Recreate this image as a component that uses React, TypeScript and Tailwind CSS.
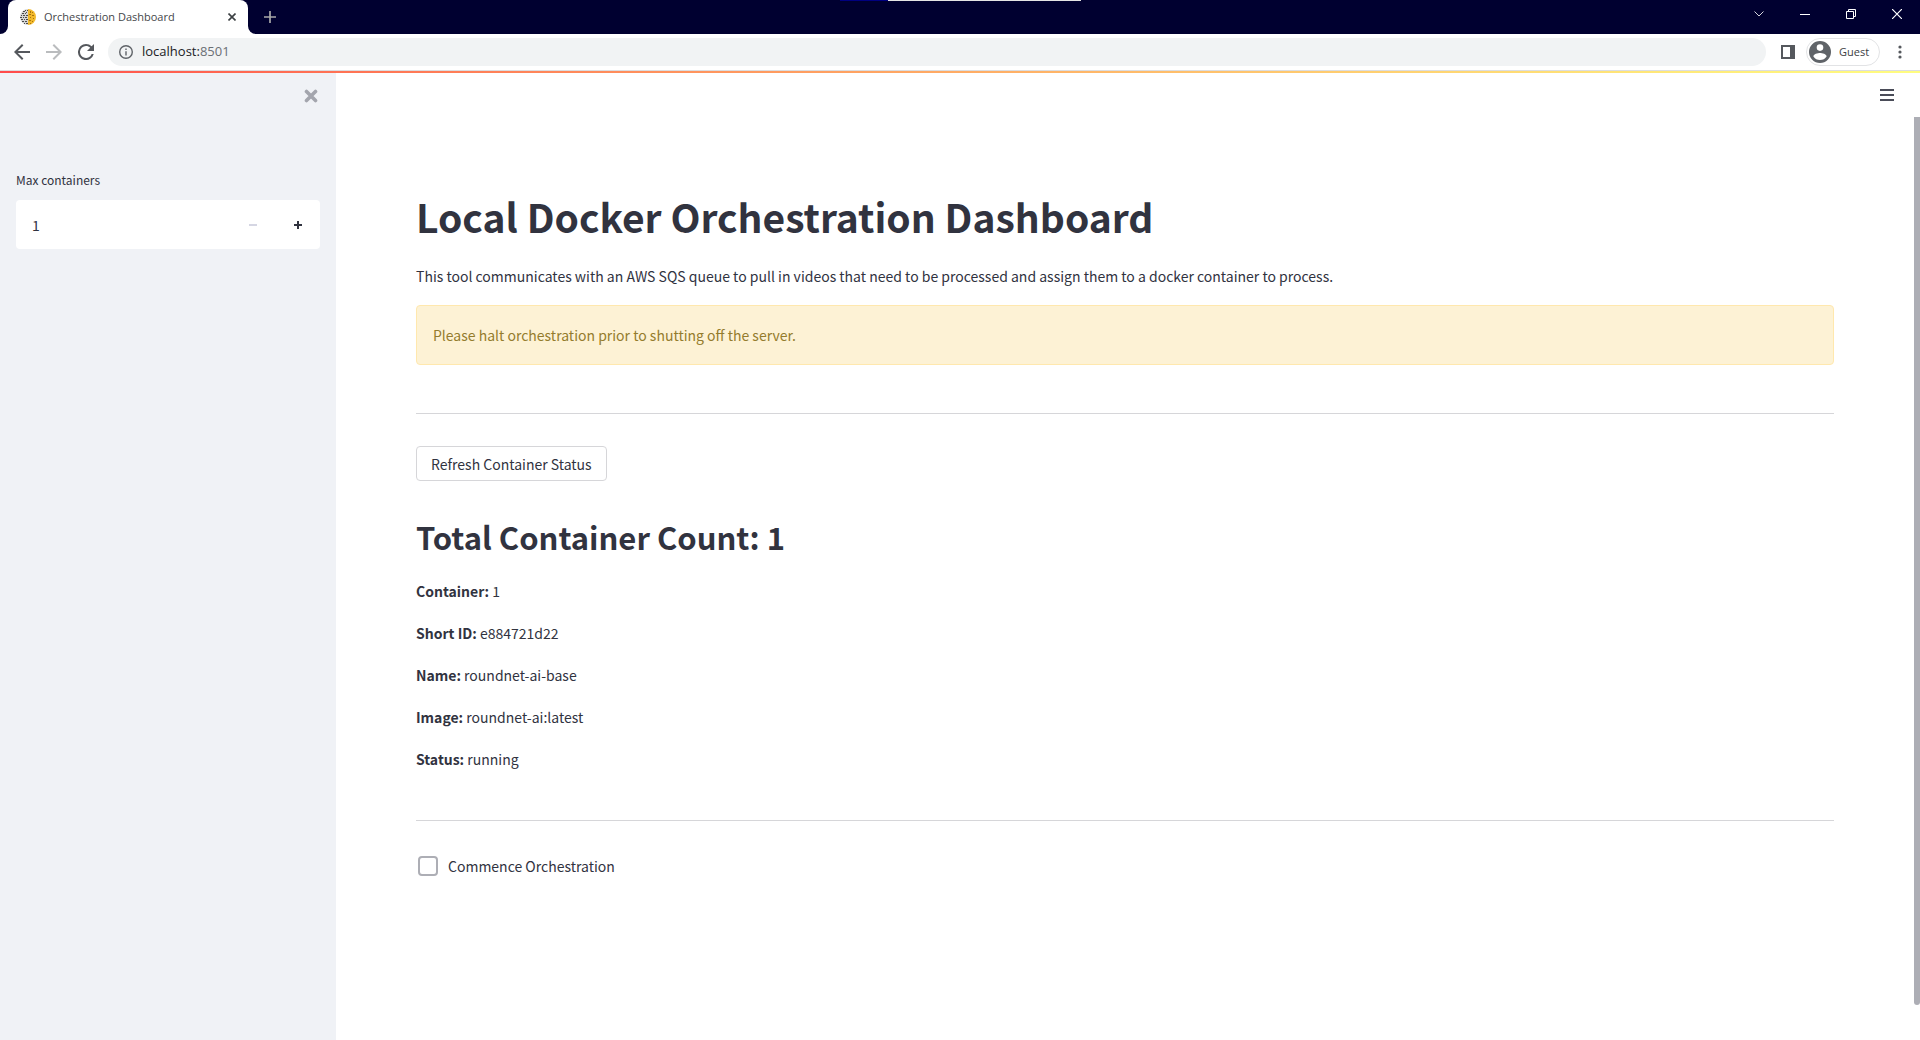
import React from "react";

const details = [
  { label: "Container:", value: "1" },
  { label: "Short ID:", value: "e884721d22" },
  { label: "Name:", value: "roundnet-ai-base" },
  { label: "Image:", value: "roundnet-ai:latest" },
  { label: "Status:", value: "running" },
];

function Favicon() {
  return (
    <svg viewBox="0 0 16 16" className="size-4 shrink-0" aria-hidden="true">
      <path d="M8 0a8 8 0 0 0 0 16z" fill="#d6d6d6" />
      <path
        d="M5 1h1v1H5zM7 1h1v1H7zM3 2h2v1H3zM6 3h1v1H6zM2 4h2v1H2zM5 4h1v1H5zM1 6h1v1H1zM3 6h2v1H3zM6 6h2v1H6zM0 8h2v1H0zM3 8h1v1H3zM5 8h2v1H5zM1 10h2v1H1zM4 10h1v1H4zM6 10h2v1H6zM2 12h2v1H2zM5 12h2v1H5zM4 14h1v1H4zM6 14h2v1H6z"
        fill="#4b4b4b"
      />
      <path d="M8 0a8 8 0 0 1 0 16z" fill="#f2b92b" />
      <path
        d="M10 2h1v2h-1zM12 3h1v1h-1zM9 5h2v1H9zM12 6h2v1h-2zM10 8h1v1h-1zM13 9h1v1h-1zM9 11h2v1H9zM12 12h1v1h-1zM10 14h1v1h-1z"
        fill="#a8730f"
      />
    </svg>
  );
}

function TabStrip() {
  return (
    <header className="relative flex h-[34px] items-stretch justify-between bg-[#000030]">
      <div className="absolute left-[43.75%] top-0 flex h-px w-[241px]" aria-hidden="true">
        <span className="w-12 bg-[#000080]" />
        <span className="flex-1 bg-[#e5e5e5]" />
      </div>
      <div className="flex">
        <div className="w-2 bg-white">
          <div className="h-full rounded-br-lg bg-[#000030]" />
        </div>
        <div className="bg-[#000030]">
          <div className="flex h-full w-60 items-center rounded-t-lg bg-white pl-3 pr-2">
            <Favicon />
            <span className="ml-2 flex-1 text-[11px] text-[#45474a]">Orchestration Dashboard</span>
            <button aria-label="Close tab" className="flex size-4 items-center justify-center">
              <svg viewBox="0 0 8 8" className="size-2" aria-hidden="true">
                <path d="M0.5 0.5l7 7M7.5 0.5l-7 7" stroke="#3c4043" strokeWidth="1.6" />
              </svg>
            </button>
          </div>
        </div>
        <div className="w-2 bg-white">
          <div className="h-full rounded-bl-lg bg-[#000030]" />
        </div>
        <button aria-label="New tab" className="flex w-7 items-center justify-center">
          <svg viewBox="0 0 12 12" className="size-3" aria-hidden="true">
            <path d="M6 0v12M0 6h12" stroke="#a8a8a8" strokeWidth="1.7" />
          </svg>
        </button>
      </div>
      <div className="flex pb-1.5">
        <button aria-label="Search tabs" className="flex w-[46px] items-center justify-center">
          <svg viewBox="0 0 10 6" className="h-1.5 w-2.5" aria-hidden="true">
            <path d="M0.5 0.5L5 5l4.500-4.500" fill="none" stroke="#d4d4dc" />
          </svg>
        </button>
        <button aria-label="Minimize" className="flex w-[46px] items-center justify-center">
          <span className="h-px w-2.5 bg-white" />
        </button>
        <button aria-label="Restore" className="flex w-[46px] items-center justify-center">
          <svg viewBox="0 0 10 10" className="size-2.5" fill="none" stroke="#fff" aria-hidden="true">
            <path d="M0.5 2.500h7v7h-7zM2.500 2.500v-2h7v7h-2" />
          </svg>
        </button>
        <button aria-label="Close" className="flex w-[46px] items-center justify-center">
          <svg viewBox="0 0 10 10" className="size-2.5" stroke="#fff" strokeWidth="1.2" aria-hidden="true">
            <path d="M0 0l10 10M10 0L0 10" />
          </svg>
        </button>
      </div>
    </header>
  );
}

function Toolbar() {
  return (
    <div className="flex h-[37px] items-center border-b border-[#dcdde0] bg-white pl-3.5 pr-3">
      <button aria-label="Back" className="mr-4">
        <svg viewBox="4 4 16 16" className="size-4" fill="#55585d" aria-hidden="true">
          <path d="M20 11H7.830l5.590-5.590L12 4l-8 8 8 8 1.410-1.410L7.830 13H20z" />
        </svg>
      </button>
      <button aria-label="Forward" className="mr-4">
        <svg viewBox="4 4 16 16" className="size-4" fill="#babcbe" aria-hidden="true">
          <path d="M12 4l-1.410 1.410L16.170 11H4v2h12.170l-5.580 5.590L12 20l8-8z" />
        </svg>
      </button>
      <button aria-label="Reload" className="mr-3.5">
        <svg viewBox="4 4 16 16" className="size-4" fill="#55585d" aria-hidden="true">
          <path d="M17.650 6.350A7.960 7.960 0 0 0 12 4a8 8 0 1 0 7.730 10h-2.080A6 6 0 1 1 12 6c1.660 0 3.140.69 4.220 1.780L13 11h7V4z" />
        </svg>
      </button>
      <div className="flex h-7 flex-1 items-center gap-[9px] rounded-full bg-[#f1f3f4] pl-[11px]">
        <svg viewBox="2 2 20 20" className="size-3.5" fill="#5f6368" aria-hidden="true">
          <path d="M11 17h2v-6h-2zm1-15a10 10 0 1 0 0 20 10 10 0 0 0 0-20zm0 18a8 8 0 1 1 0-16 8 8 0 0 1 0 16zM11 9h2V7h-2z" />
        </svg>
        <span className="text-[13px] text-[#202124]">
          localhost:<span className="text-[#6b6f74]">8501</span>
        </span>
      </div>
      <button aria-label="Side panel" className="ml-[15px] mr-[11px]">
        <svg viewBox="0 0 14 14" className="size-3.5" aria-hidden="true">
          <path d="M0 0h14v14H0zM2 2v10h7V2z" fill="#55585d" fillRule="evenodd" />
        </svg>
      </button>
      <button className="mr-3 flex h-7 w-[74px] items-center gap-2 rounded-full border border-[#e2e3e5] pl-0.5">
        <svg viewBox="2 2 20 20" className="size-[22px]" fill="#5f6368" aria-hidden="true">
          <path d="M12 2a10 10 0 1 0 0 20 10 10 0 0 0 0-20zm0 3a3 3 0 1 1 0 6 3 3 0 0 1 0-6zm0 14.200a7.200 7.200 0 0 1-6-3.220c.03-1.990 4-3.080 6-3.080s5.970 1.090 6 3.080a7.200 7.200 0 0 1-6 3.220z" />
        </svg>
        <span className="text-[11px] text-[#3c4043]">Guest</span>
      </button>
      <button aria-label="Menu" className="flex w-4 justify-center">
        <svg viewBox="0 0 4 14" className="h-3.5 w-1" fill="#55585d" aria-hidden="true">
          <circle cx="2" cy="2" r="1.600" />
          <circle cx="2" cy="7" r="1.600" />
          <circle cx="2" cy="12" r="1.600" />
        </svg>
      </button>
    </div>
  );
}

function Sidebar() {
  return (
    <aside className="w-[336px] shrink-0 bg-[#f0f2f6] px-4">
      <div className="flex justify-end pt-[15px]">
        <button aria-label="Close sidebar" className="mr-px flex size-4 items-center justify-center">
          <svg viewBox="0 0 14 14" className="size-3.5" aria-hidden="true">
            <path d="M2.500 2.500l9 9M11.500 2.500l-9 9" stroke="#a3a5ad" strokeWidth="3.600" strokeLinecap="round" />
          </svg>
        </button>
      </div>
      <label htmlFor="max" className="mt-[66px] block text-xs leading-5 text-[#31333f]">
        Max containers
      </label>
      <div className="mt-2.5 flex h-[49px] overflow-hidden rounded bg-white">
        <input
          id="max"
          defaultValue="1"
          className="min-w-0 flex-1 bg-transparent px-4 text-sm text-[#31333f] outline-none"
        />
        <button aria-label="Decrease" className="flex w-[45px] items-center justify-center">
          <span className="h-0.5 w-2 bg-[#d5d6e3]" />
        </button>
        <button aria-label="Increase" className="flex w-[45px] items-center justify-center">
          <svg viewBox="0 0 8 8" className="size-2" aria-hidden="true">
            <path d="M3 0h2v3h3v2H5v3H3V5H0V3h3z" fill="#31333f" />
          </svg>
        </button>
      </div>
    </aside>
  );
}

export default function App() {
  return (
    <div className="flex min-h-screen flex-col bg-white font-['Open_Sans',sans-serif]">
      <TabStrip />
      <Toolbar />
      <div className="h-0.5 bg-linear-to-r from-[#ff4b4b] to-[#fffd80]" />
      <div className="relative flex flex-1 font-['Noto_Sans_CJK_SC','Noto_Sans',sans-serif] text-[#31333f]">
        <Sidebar />
        <main className="flex-1 pb-24 pl-20 pr-[86px] pt-27 text-sm leading-[26px]">
          <h1 className="py-2 text-[39px] font-bold leading-[54px]">Local Docker Orchestration Dashboard</h1>
          <p className="mt-3">
            This tool communicates with an AWS SQS queue to pull in videos that need to be processed and assign them to
            a docker container to process.
          </p>
          <div
            role="alert"
            className="mt-4 rounded border border-[#ffe8ae] bg-[#fdf2d5] p-4 text-[#947c2d]"
          >
            Please halt orchestration prior to shutting off the server.
          </div>
          <hr className="mt-12 border-[#d6d6d9]" />
          <button className="mt-8 h-[35px] rounded border border-[#d6d6d9] px-3.5 leading-5">
            Refresh Container Status
          </button>
          <h2 className="mt-8 text-[31px] font-bold leading-[48px]">Total Container Count: 1</h2>
          <div className="mt-[17px] flex flex-col gap-4">
            {details.map((item) => (
              <p key={item.label}>
                <strong className="font-bold">{item.label}</strong> {item.value}
              </p>
            ))}
          </div>
          <hr className="mt-12 border-[#d6d6d9]" />
          <label className="mt-8 flex w-fit items-center gap-2.5 pl-0.5">
            <input
              type="checkbox"
              className="size-5 appearance-none rounded border-2 border-[#adaeb5] bg-white checked:bg-[#ff4b4b]"
            />
            Commence Orchestration
          </label>
        </main>
        <button aria-label="Main menu" className="absolute right-[26px] top-4 flex w-3.5 flex-col gap-[3px]">
          <span className="h-0.5 w-3.5 bg-[#4a4c58]" />
          <span className="h-0.5 w-3.5 bg-[#4a4c58]" />
          <span className="h-0.5 w-3.5 bg-[#4a4c58]" />
        </button>
        <div className="absolute bottom-[35px] right-0 top-11 w-1.5 rounded-b-full bg-[#adaeb5]" />
      </div>
    </div>
  );
}
